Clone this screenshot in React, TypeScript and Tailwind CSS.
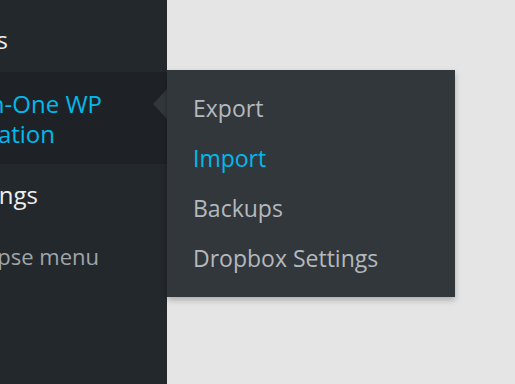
const font = { fontFamily: '"Open Sans", "Noto Sans", sans-serif' };

function MenuLine({ width, children, className = '' }: { width: string; children: string; className?: string }) {
  return <div className={`flex justify-end whitespace-nowrap ${width} ${className}`}>{children}</div>;
}

export default function App() {
  const submenu = [
    { label: 'Export', current: false },
    { label: 'Import', current: true },
    { label: 'Backups', current: false },
    { label: 'Dropbox Settings', current: false },
  ];

  return (
    <div className="relative flex h-[384px] w-[515px] overflow-hidden bg-[#e5e5e5]" style={font}>
      <nav className="flex w-[167px] shrink-0 flex-col overflow-hidden bg-[#23282d] text-[24px]">
        <div className="h-[72px] pt-[25px] leading-[30px] text-[#eeeeee]">
          <MenuLine width="w-[8px]">Tools</MenuLine>
        </div>
        <div className="h-[92px] bg-[#1e2227] pt-[17px] leading-[30px] text-[#00b9eb]">
          <MenuLine width="w-[102px]">All-in-One WP</MenuLine>
          <MenuLine width="w-[55px]">Migration</MenuLine>
        </div>
        <div className="h-[62px] pt-[16px] leading-[30px] text-[#eeeeee]">
          <MenuLine width="w-[38px]">Settings</MenuLine>
        </div>
        <div className="pt-[15px] text-[22px] leading-[30px] text-[#a0a5aa]">
          <MenuLine width="w-[99px]">Collapse menu</MenuLine>
        </div>
      </nav>

      <div className="absolute left-[153px] top-[89px] h-0 w-0 border-y-[15px] border-r-[14px] border-y-transparent border-r-[#32373c]" />

      <div className="absolute left-[167px] top-[70px] flex h-[227px] w-[288px] flex-col bg-[#32373c] pl-[26px] pt-[13px] text-[23px] leading-[50px] shadow-[0_3px_6px_rgba(0,0,0,0.25)]">
        {submenu.map((item) => (
          <div key={item.label} className={item.current ? 'text-[#00b9eb]' : 'text-[#b4b9be]'}>
            {item.label}
          </div>
        ))}
      </div>
    </div>
  );
}
